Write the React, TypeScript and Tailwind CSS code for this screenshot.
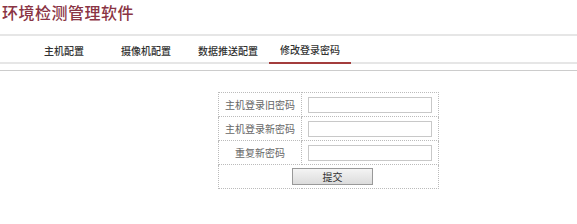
import React from "react";

const cjk = { fontFamily: '"Noto Sans CJK SC", "Noto Sans", sans-serif' };

export default function App() {
  const tabs = ["主机配置", "摄像机配置", "数据推送配置", "修改登录密码"];
  const rows = ["主机登录旧密码", "主机登录新密码", "重复新密码"];
  return (
    <div className="w-[577px] h-[224px] bg-white overflow-hidden" style={cjk}>
      <div className="h-[34px] pl-[2px] pt-[1px] text-[16px] leading-[22px] font-medium text-[#8a3444] tracking-[0.5px]">
        环境检测管理软件
      </div>
      <div className="border-t-2 border-b-2 border-[#e6e6e6] h-[30px] flex pl-[23px]">
        {tabs.map((t, i) => (
          <div
            key={t}
            className={
              "w-[82px] h-[28px] mb-[-2px] flex items-center justify-center text-[10px] text-[#333] font-medium " +
              (i === 3 ? "border-b-2 border-[#a33c3c]" : "")
            }
          >
            {t}
          </div>
        ))}
      </div>
      <div className="mt-[6px] border-t border-[#cccccc]" />
      <div className="mt-[21px] ml-[218px] w-[221px]">
        <table className="border-collapse border border-dotted border-[#bbbbbb] w-full">
          <tbody>
            {rows.map((r) => (
              <tr key={r} className="h-[24px]">
                <td className="border border-dotted border-[#bbbbbb] w-[83px] text-center text-[10px] text-[#666] p-0">
                  {r}
                </td>
                <td className="border border-dotted border-[#bbbbbb] p-0 pl-[6px]">
                  <input
                    type="text"
                    className="block w-[124px] h-[16px] border border-[#c8c8c8] bg-white outline-none"
                  />
                </td>
              </tr>
            ))}
            <tr className="h-[24px]">
              <td colSpan={2} className="border border-dotted border-[#bbbbbb] p-0">
                <div className="flex justify-center pl-[8px]">
                  <button className="w-[81px] h-[17px] border border-[#999] bg-gradient-to-b from-[#f4f4f4] to-[#dcdcdc] text-[10px] text-[#333] leading-[15px]">
                    提交
                  </button>
                </div>
              </td>
            </tr>
          </tbody>
        </table>
      </div>
    </div>
  );
}
